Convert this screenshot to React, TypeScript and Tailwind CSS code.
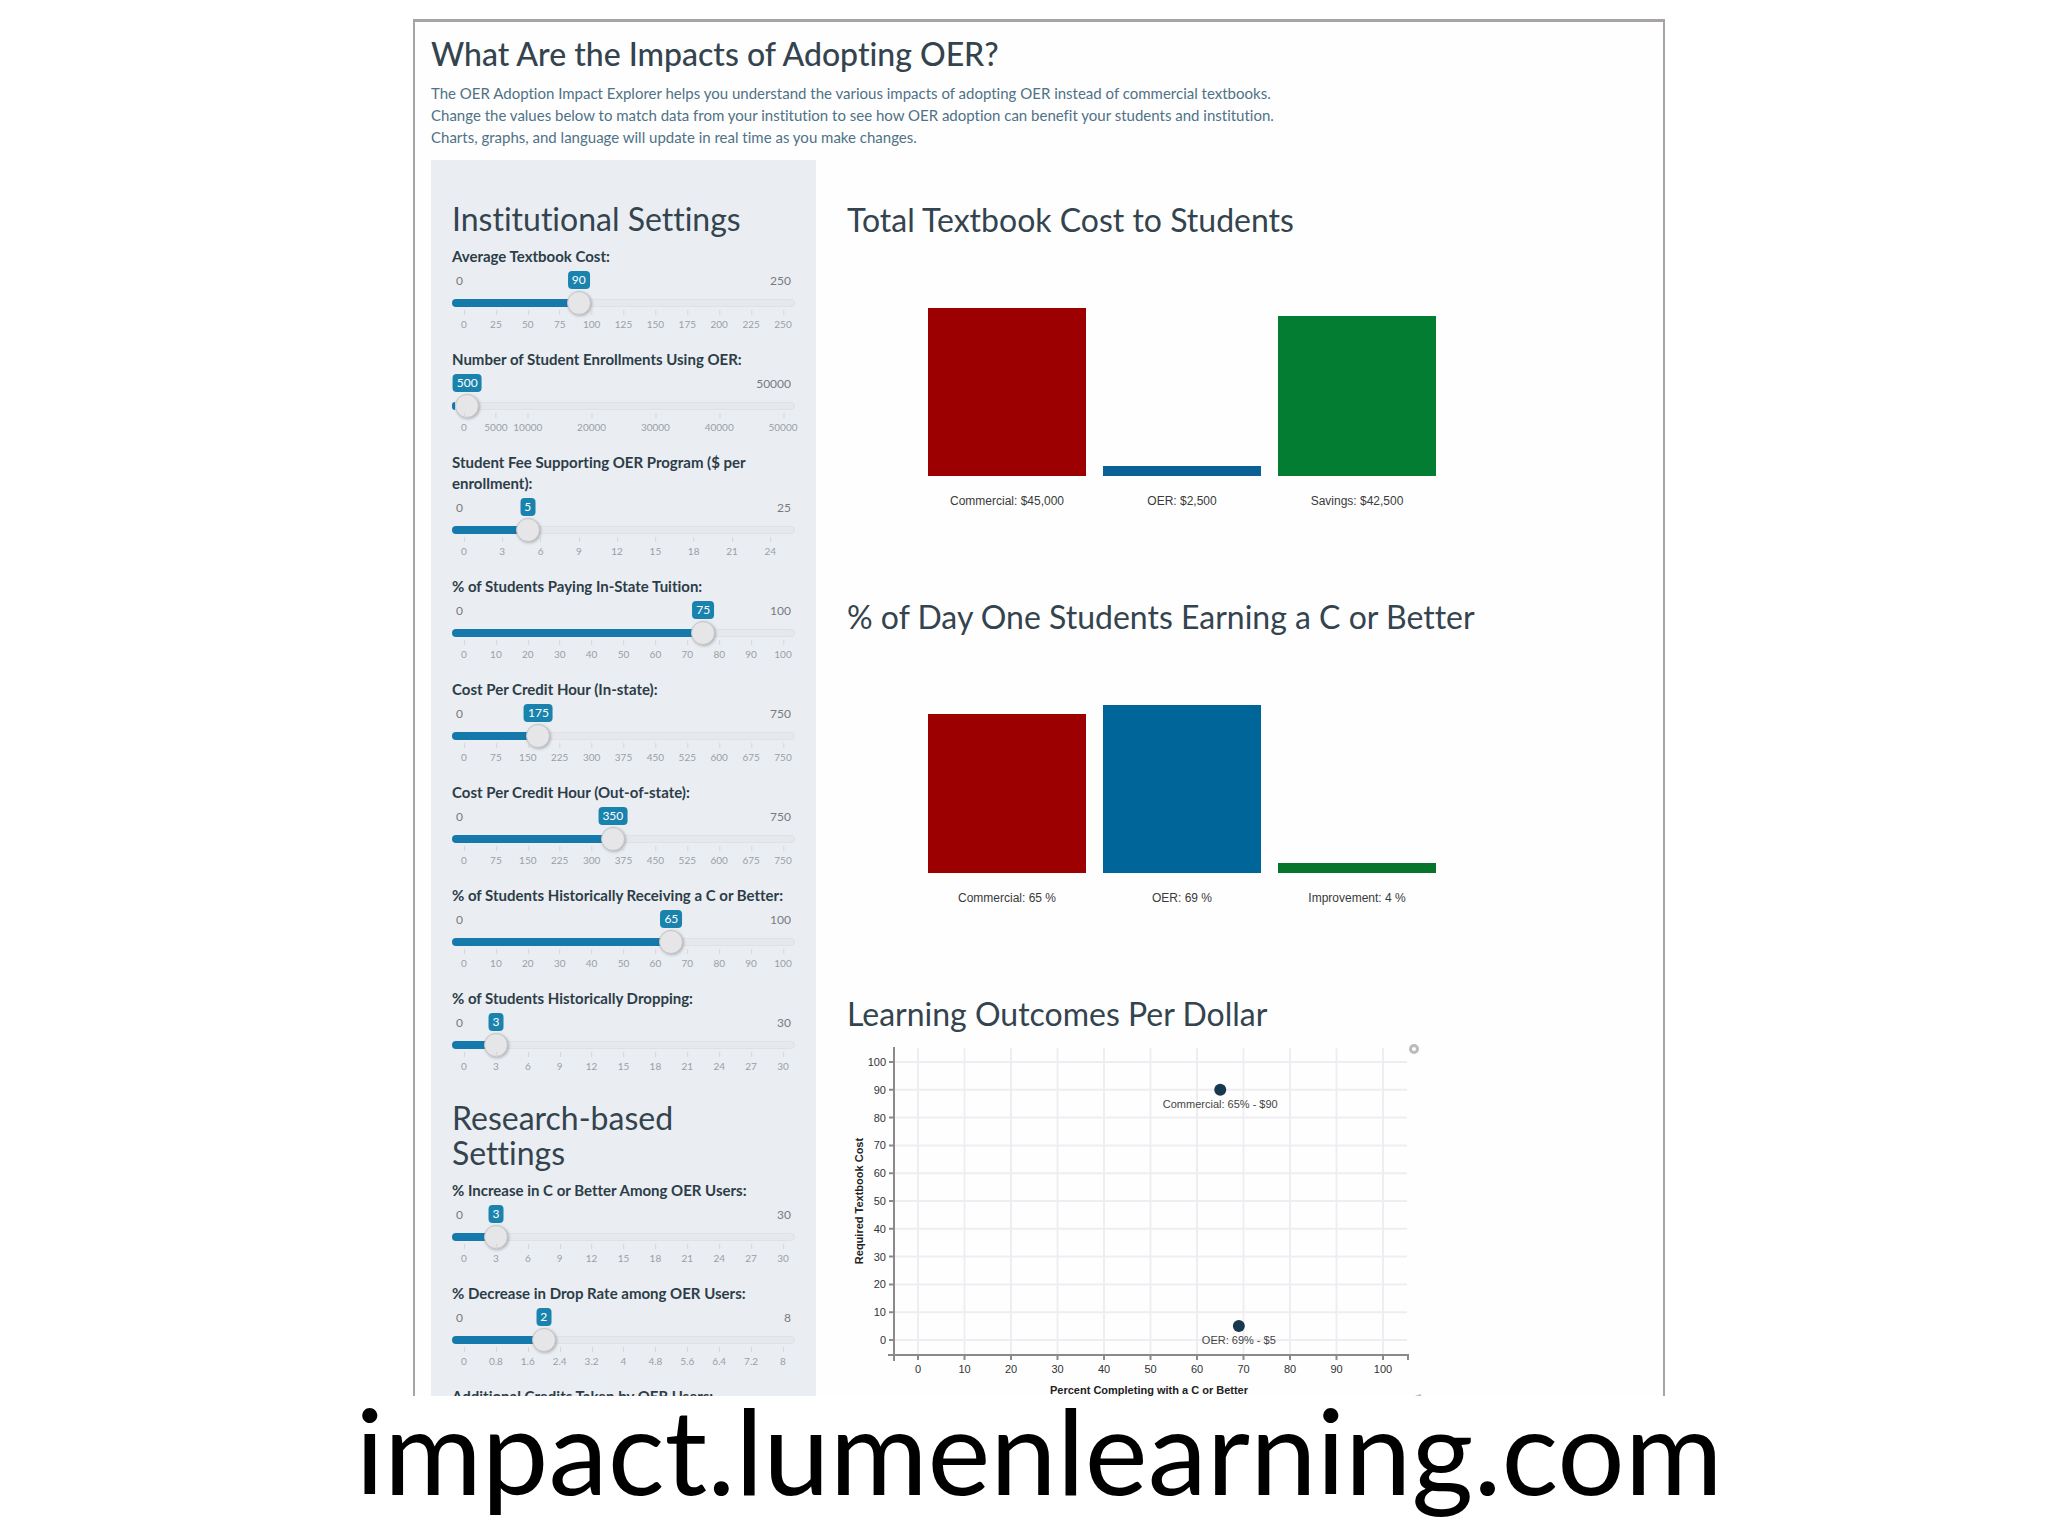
import { useId, useState } from "react";

type SliderSpec = {
  label: string;
  max: number;
  value: number;
  step?: number;
  ticks: number[];
};

const range = (count: number, step: number) =>
  Array.from({ length: count }, (_, i) => Math.round(i * step * 10) / 10);

const institutional: SliderSpec[] = [
  { label: "Average Textbook Cost:", max: 250, value: 90, ticks: range(11, 25) },
  {
    label: "Number of Student Enrollments Using OER:",
    max: 50000,
    value: 500,
    ticks: [0, 5000, 10000, 20000, 30000, 40000, 50000],
  },
  {
    label: "Student Fee Supporting OER Program ($ per enrollment):",
    max: 25,
    value: 5,
    ticks: range(9, 3),
  },
  { label: "% of Students Paying In-State Tuition:", max: 100, value: 75, ticks: range(11, 10) },
  { label: "Cost Per Credit Hour (In-state):", max: 750, value: 175, ticks: range(11, 75) },
  { label: "Cost Per Credit Hour (Out-of-state):", max: 750, value: 350, ticks: range(11, 75) },
  {
    label: "% of Students Historically Receiving a C or Better:",
    max: 100,
    value: 65,
    ticks: range(11, 10),
  },
  { label: "% of Students Historically Dropping:", max: 30, value: 3, ticks: range(11, 3) },
];

const research: SliderSpec[] = [
  { label: "% Increase in C or Better Among OER Users:", max: 30, value: 3, ticks: range(11, 3) },
  {
    label: "% Decrease in Drop Rate among OER Users:",
    max: 8,
    value: 2,
    step: 0.1,
    ticks: range(11, 0.8),
  },
  { label: "Additional Credits Taken by OER Users:", max: 10, value: 2, ticks: [] },
];

function Slider({ label, max, value, step = 1, ticks }: SliderSpec) {
  const id = useId();
  const [current, setCurrent] = useState(value);
  const percent = (current / max) * 100;
  return (
    <div className="pb-[24px]">
      <label htmlFor={id} className="block text-[15px] leading-[21px] font-bold text-[#2d3d47]">
        {label}
      </label>
      <div className="relative mt-1 flex h-5 items-center justify-between px-1 text-[12px] text-[#777b80]">
        <span>{current / max < 0.02 ? "" : 0}</span>
        <span>{max}</span>
        <div className="absolute inset-x-3 inset-y-0">
          <output
            htmlFor={id}
            className="absolute top-0 -translate-x-1/2 rounded-[4px] bg-[#1a83ad] px-[4px] text-[12px] leading-[18px] text-white"
            style={{ left: `${percent}%` }}
          >
            {current}
          </output>
        </div>
      </div>
      <div className="relative flex h-6 items-center">
        <div className="absolute inset-x-0 h-[8px] rounded-sm border border-[#dfe1e7] bg-[#e6e8ee]">
          <div className="mr-3 -ml-px h-full">
            <div
              className="-mt-px h-[8px] rounded-l-sm bg-[#1579ab]"
              style={{ width: `${percent}%` }}
            />
          </div>
        </div>
        <input
          id={id}
          type="range"
          min={0}
          max={max}
          step={step}
          value={current}
          onChange={(e) => setCurrent(Number(e.target.value))}
          className="relative h-6 w-full cursor-pointer appearance-none bg-transparent [&::-webkit-slider-thumb]:h-6 [&::-webkit-slider-thumb]:w-6 [&::-webkit-slider-thumb]:appearance-none [&::-webkit-slider-thumb]:rounded-full [&::-webkit-slider-thumb]:border [&::-webkit-slider-thumb]:border-[#c4c4c7] [&::-webkit-slider-thumb]:bg-[#e6e5e7] [&::-webkit-slider-thumb]:shadow-[1px_1px_3px_rgba(0,0,0,0.25)]"
        />
      </div>
      <div className="relative mx-3 h-[10px] text-[10px] leading-[14px] text-[#9a9ea5]">
        {ticks.map((tick) => (
          <span
            key={tick}
            className="absolute top-[2px] -translate-x-1/2 before:absolute before:-top-[7px] before:left-1/2 before:h-[5px] before:w-px before:bg-[#d3d6dc]"
            style={{ left: `${(tick / max) * 100}%` }}
          >
            {tick}
          </span>
        ))}
      </div>
    </div>
  );
}

type Bar = { label: string; height: number; tone: string };

const costBars: Bar[] = [
  { label: "Commercial: $45,000", height: 168, tone: "bg-[#9c0000]" },
  { label: "OER: $2,500", height: 10, tone: "bg-[#0b6196]" },
  { label: "Savings: $42,500", height: 160, tone: "bg-[#027d32]" },
];

const gradeBars: Bar[] = [
  { label: "Commercial: 65 %", height: 159, tone: "bg-[#9c0000]" },
  { label: "OER: 69 %", height: 168, tone: "bg-[#006598]" },
  { label: "Improvement: 4 %", height: 10, tone: "bg-[#06752c]" },
];

function BarSection({ title, bars }: { title: string; bars: Bar[] }) {
  return (
    <section className="pb-[89px]">
      <h2 className="text-[32px] leading-[36px] text-[#34444e]">{title}</h2>
      <div className="mt-[70px] flex items-end gap-[17px] pl-[81px]">
        {bars.map((bar) => (
          <figure key={bar.label} className="w-[158px]">
            <div className={bar.tone} style={{ height: bar.height }} />
            <figcaption className="mt-4 text-center font-['Liberation_Sans',sans-serif] text-[12px] leading-[18px] text-[#3a3a3a]">
              {bar.label}
            </figcaption>
          </figure>
        ))}
      </div>
    </section>
  );
}

const px = (v: number) => 71 + v * 4.65;
const py = (v: number) => 301 - v * 2.78;
const marks = range(11, 10);

function ScatterChart() {
  return (
    <svg
      width="600"
      height="366"
      viewBox="0 0 600 366"
      role="img"
      aria-label="Learning Outcomes Per Dollar"
      className="font-['Liberation_Sans',sans-serif]"
    >
      <g stroke="#efedf1" strokeWidth="2">
        {marks.map((m) => (
          <path key={m} d={`M${px(m)} 9V316M47 ${py(m)}H560`} />
        ))}
      </g>
      <g stroke="#8a8a8d" strokeWidth="2" fill="none">
        <path d="M47 8V316H561V321M41 316H47V322" />
        {marks.map((m) => (
          <path key={m} d={`M${px(m)} 316V321M42 ${py(m)}H47`} />
        ))}
      </g>
      <g fontSize="11" fill="#333">
        {marks.map((m) => (
          <g key={m}>
            <text x={px(m)} y="334" textAnchor="middle">
              {m}
            </text>
            <text x="39" y={py(m) + 4} textAnchor="end">
              {m}
            </text>
          </g>
        ))}
      </g>
      <g fontSize="11" fontWeight="700" fill="#222" textAnchor="middle">
        <text x="302" y="355">
          Percent Completing with a C or Better
        </text>
        <text transform="translate(16 162) rotate(-90)">Required Textbook Cost</text>
      </g>
      <g fill="#17384f">
        <circle cx={px(65)} cy={py(90)} r="6" />
        <circle cx={px(69)} cy={py(5)} r="6" />
      </g>
      <g fontSize="11" fill="#444" textAnchor="middle">
        <text x={px(65)} y="69">
          Commercial: 65% - $90
        </text>
        <text x={px(69)} y="305">
          OER: 69% - $5
        </text>
      </g>
      <g fill="none" stroke="#bbb" strokeWidth="3">
        <circle cx="567" cy="10" r="3.5" />
        <path d="M568 358l6-2" strokeWidth="2" />
      </g>
    </svg>
  );
}

export default function App() {
  return (
    <div className="flex h-screen flex-col items-center bg-white pt-[19px] pl-[30px] font-['Lato',sans-serif] [font-variant-ligatures:none]">
      <main className="min-h-0 w-full max-w-[1252px] flex-1 overflow-hidden border-x-2 border-t-[3px] border-[#a8a4a6] bg-[#fefefe] px-4 pt-[14px]">
        <header className="text-[#34444e]">
          <h1 className="text-[32px] leading-[36px] font-medium">
            What Are the Impacts of Adopting OER?
          </h1>
          <p className="mt-[10px] text-[15px] leading-[22px] text-[#4f7286]">
            The OER Adoption Impact Explorer helps you understand the various impacts of adopting
            OER instead of commercial textbooks.
            <br />
            Change the values below to match data from your institution to see how OER adoption can
            benefit your students and institution.
            <br />
            Charts, graphs, and language will update in real time as you make changes.
          </p>
        </header>
        <div className="mt-3 flex items-start gap-[31px]">
          <aside className="w-[385px] shrink-0 bg-[#eaeef3] px-[21px] pt-[41px]">
            <h2 className="mb-[10px] text-[32px] leading-[35px] text-[#34444e]">
              Institutional Settings
            </h2>
            {institutional.map((s) => (
              <Slider key={s.label} {...s} />
            ))}
            <h2 className="mt-[9px] mb-[10px] text-[32px] leading-[35px] text-[#34444e]">
              Research-based
              <br />
              Settings
            </h2>
            {research.map((s) => (
              <Slider key={s.label} {...s} />
            ))}
          </aside>
          <div className="min-w-0 flex-1 pt-[42px]">
            <BarSection title="Total Textbook Cost to Students" bars={costBars} />
            <BarSection title="% of Day One Students Earning a C or Better" bars={gradeBars} />
            <section>
              <h2 className="mb-[7px] text-[32px] leading-[36px] text-[#34444e]">
                Learning Outcomes Per Dollar
              </h2>
              <ScatterChart />
            </section>
          </div>
        </div>
      </main>
      <p className="h-[140px] shrink-0 text-[119px] leading-[106px] text-black">
        impact.lumenlearning.com
      </p>
    </div>
  );
}
